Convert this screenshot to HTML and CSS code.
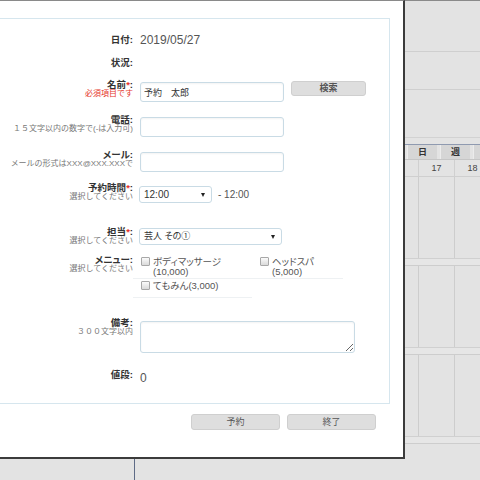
FILE: index.html
```html
<!DOCTYPE html>
<html lang="ja">
<head>
<meta charset="utf-8">
<title>予約</title>
<link rel="stylesheet" href="styles.css">
</head>
<body>
<div class="bg">
  <div class="band band1"></div>
  <div class="band band2"></div>
  <div class="band band3"></div>
  <div class="toolbar">
    <span class="tb">月</span><span class="tb">日</span><span class="tb">週</span><span class="tb"></span>
  </div>
  <div class="cal-head"><div class="hc">17</div><div class="hc">18</div></div>
  <div class="cal-row"><div class="cc"></div><div class="cc"></div></div>
  <div class="cal-sep"></div>
  <div class="cal-row"><div class="cc"></div><div class="cc"></div></div>
  <div class="cal-sep"></div>
  <div class="cal-row"><div class="cc"></div><div class="cc"></div></div>
  <div class="cal-sep"></div>
  <div class="bg-rest"></div>
</div>

<div class="modal">
  <div class="panel">
    <div class="row row-date">
      <div class="lbl"><div class="lbl-main">日付:</div></div>
      <div class="field"><div class="val">2019/05/27</div></div>
    </div>
    <div class="row row-status">
      <div class="lbl"><div class="lbl-main">状況:</div></div>
      <div class="field"></div>
    </div>
    <div class="row row-name">
      <div class="lbl"><div class="lbl-main">名前<span class="req">*</span>:</div><div class="lbl-sub err">必須項目です</div></div>
      <div class="field field-inline">
        <input class="inp" type="text" value="予約　太郎">
        <button class="btn btn-search" type="button">検索</button>
      </div>
    </div>
    <div class="row row-tel">
      <div class="lbl"><div class="lbl-main">電話:</div><div class="lbl-sub">１５文字以内の数字で(-は入力可)</div></div>
      <div class="field"><input class="inp" type="text" value=""></div>
    </div>
    <div class="row row-mail">
      <div class="lbl"><div class="lbl-main">メール:</div><div class="lbl-sub">メールの形式はXXX@XXX.XXXで</div></div>
      <div class="field"><input class="inp" type="text" value=""></div>
    </div>
    <div class="row row-time">
      <div class="lbl"><div class="lbl-main">予約時間<span class="req">*</span>:</div><div class="lbl-sub">選択してください</div></div>
      <div class="field field-inline">
        <div class="sel sel-time">12:00</div>
        <span class="time-end">- 12:00</span>
      </div>
    </div>
    <div class="row row-staff">
      <div class="lbl"><div class="lbl-main">担当<span class="req">*</span>:</div><div class="lbl-sub">選択してください</div></div>
      <div class="field"><div class="sel sel-staff">芸人 その①</div></div>
    </div>
    <div class="row row-menu">
      <div class="lbl"><div class="lbl-main">メニュー:</div><div class="lbl-sub">選択してください</div></div>
      <div class="field">
        <div class="menu">
          <div class="mi"><span class="cb"></span><span class="mi-text">ボディマッサージ<br>(10,000)</span></div>
          <div class="mi"><span class="cb"></span><span class="mi-text">ヘッドスパ<br>(5,000)</span></div>
          <div class="mi"><span class="cb"></span><span class="mi-text">てもみん(3,000)</span></div>
        </div>
      </div>
    </div>
    <div class="row row-note">
      <div class="lbl"><div class="lbl-main">備考:</div><div class="lbl-sub">３００文字以内</div></div>
      <div class="field"><textarea class="ta"></textarea></div>
    </div>
    <div class="row row-price">
      <div class="lbl"><div class="lbl-main">値段:</div></div>
      <div class="field"><div class="val val-price">0</div></div>
    </div>
  </div>
  <div class="actions">
    <button class="btn abtn" type="button">予約</button>
    <button class="btn abtn" type="button">終了</button>
  </div>
</div>
</body>
</html>
```

FILE: styles.css
```css
* { box-sizing: border-box; }
html, body { margin: 0; padding: 0; }
body {
  width: 480px;
  height: 480px;
  overflow: hidden;
  position: relative;
  background: #e3e3e3;
  font-family: "Liberation Sans", "Noto Sans CJK JP", sans-serif;
  font-feature-settings: "palt";
  color: #333;
}

/* background calendar */
.bg { width: 480px; height: 480px; overflow: hidden; }
.band { border-bottom: 1px solid #cfcfcf; }
.band1 { height: 52px; border-top: 1px solid #8a8a8a; }
.band2 { height: 38px; }
.band3 { height: 48px; border-bottom-color: #d2d2d2; }
.toolbar {
  margin-top: 6px;
  height: 16px;
  display: flex;
  gap: 3px;
  padding-left: 374px;
  border-top: 1px solid #8f9ab0;
  border-bottom: 1px solid #c6c6c6;
  overflow: hidden;
}
.tb {
  flex: none;
  width: 30px;
  height: 14px;
  background: #d6d6d6;
  border-left: 1px solid #ececec;
  font-size: 9px;
  font-weight: bold;
  line-height: 14px;
  text-align: center;
  color: #333;
}
.cal-head {
  display: flex;
  height: 17px;
  padding-left: 418px;
  border-bottom: 1px solid #cfcfcf;
}
.hc {
  flex: none;
  width: 36px;
  border-left: 1px solid #d0d0d0;
  font-size: 9px;
  line-height: 16px;
  text-align: center;
  color: #444;
}
.cal-row {
  display: flex;
  height: 81px;
  padding-left: 418px;
}
.cc {
  flex: none;
  width: 36px;
  border-left: 1px solid #cdcdcd;
}
.cal-sep {
  height: 8px;
  border-top: 1px solid #d0d0d0;
  border-bottom: 1px solid #cdcdcd;
  background: #e6e6e6;
}
.bg-rest {
  height: 60px;
  margin-left: 134px;
  border-left: 1px solid #5e6b86;
}

/* modal */
.modal {
  position: absolute;
  left: 0;
  top: 0;
  width: 405px;
  height: 459px;
  background: #fff;
  border-top: 1px solid #8a8a8a;
  border-right: 2px solid #3b3b3b;
  border-bottom: 2px solid #3b3b3b;
}
.panel {
  margin-top: 17px;
  width: 390px;
  height: 386px;
  border: 1px solid #d6e6ee;
  border-left: none;
  padding-top: 16px;
}
.row { display: flex; }
.row-date { height: 23px; }
.row-status { height: 22px; }
.row-name { height: 35px; }
.row-tel { height: 35px; }
.row-mail { height: 33px; }
.row-time { height: 44px; }
.row-staff { height: 28px; }
.row-menu { height: 63px; }
.row-note { height: 52px; }

.lbl {
  flex: none;
  width: 133px;
  text-align: right;
}
.lbl-main {
  font-size: 9.5px;
  line-height: 9px;
  font-weight: bold;
  color: #333;
}
.lbl-sub {
  font-size: 8px;
  line-height: 9px;
  color: #777;
  white-space: nowrap;
  font-feature-settings: normal;
}
.lbl-sub.err, .req { color: #e5332a; }

.field { margin-left: 7px; flex: 1; }
.field-inline { display: flex; align-items: flex-start; }

.val {
  font-size: 12px;
  line-height: 10px;
  color: #555;
}
.val-price { margin-top: 3px; }

.inp {
  display: block;
  margin: 2px 0 0;
  width: 144px;
  height: 20px;
  padding: 0 3px;
  border: 1px solid #c9dbe5;
  border-radius: 3px;
  box-shadow: inset 0 1px 2px rgba(0, 0, 0, 0.05);
  font-family: "Liberation Sans", "Noto Sans CJK JP", sans-serif;
  font-size: 9px;
  color: #333;
  background: #fff;
  outline: none;
}

.btn {
  background: #dedede;
  border: 1px solid #cfcfcf;
  border-radius: 3px;
  padding: 0;
  font-family: "Liberation Sans", "Noto Sans CJK JP", sans-serif;
  font-size: 9px;
  color: #444;
}
.btn-search {
  margin: 1px 0 0 7px;
  width: 75px;
  height: 15px;
  line-height: 13px;
  font-weight: bold;
  color: #555;
}

.sel {
  position: relative;
  height: 17px;
  border: 1px solid #c9dbe5;
  border-radius: 3px;
  padding-left: 4px;
  font-size: 10px;
  line-height: 15px;
  color: #333;
  background: #fff;
}
.sel::after {
  content: "";
  position: absolute;
  top: 6px;
  right: 6px;
  border-left: 2.5px solid transparent;
  border-right: 2.5px solid transparent;
  border-top: 4px solid #222;
}
.sel-time { width: 73px; margin-top: 3px; margin-left: -1px; }
.time-end {
  margin: 3px 0 0 6px;
  font-size: 10px;
  line-height: 17px;
  color: #555;
}
.sel-staff { width: 143px; margin-top: 1px; margin-left: -1px; font-size: 9px; }

.menu {
  display: grid;
  grid-template-columns: 119px 91px;
  margin-left: -7px;
}
.mi {
  display: flex;
  align-items: flex-start;
  min-height: 19px;
  padding: 2px 0 2px 8px;
  border-bottom: 1px solid #eef1f3;
  font-size: 9.5px;
  line-height: 9.5px;
  color: #555;
}
.cb {
  flex: none;
  width: 9px;
  height: 9px;
  margin: 0 3px 0 0;
  border: 1px solid #a8a8a8;
  border-radius: 1px;
  background: linear-gradient(#fbfbfb, #dadada);
}

.ta {
  display: block;
  margin: 3px 0 0;
  width: 215px;
  height: 32px;
  border: 1px solid #c9dbe5;
  border-radius: 3px;
  box-shadow: inset 0 1px 2px rgba(0, 0, 0, 0.05);
  resize: both;
  outline: none;
}

.actions {
  display: flex;
  justify-content: flex-end;
  gap: 7px;
  margin-top: 10px;
  padding-right: 27px;
}
.abtn {
  width: 89px;
  height: 16px;
  line-height: 14px;
  color: #555;
}
```
